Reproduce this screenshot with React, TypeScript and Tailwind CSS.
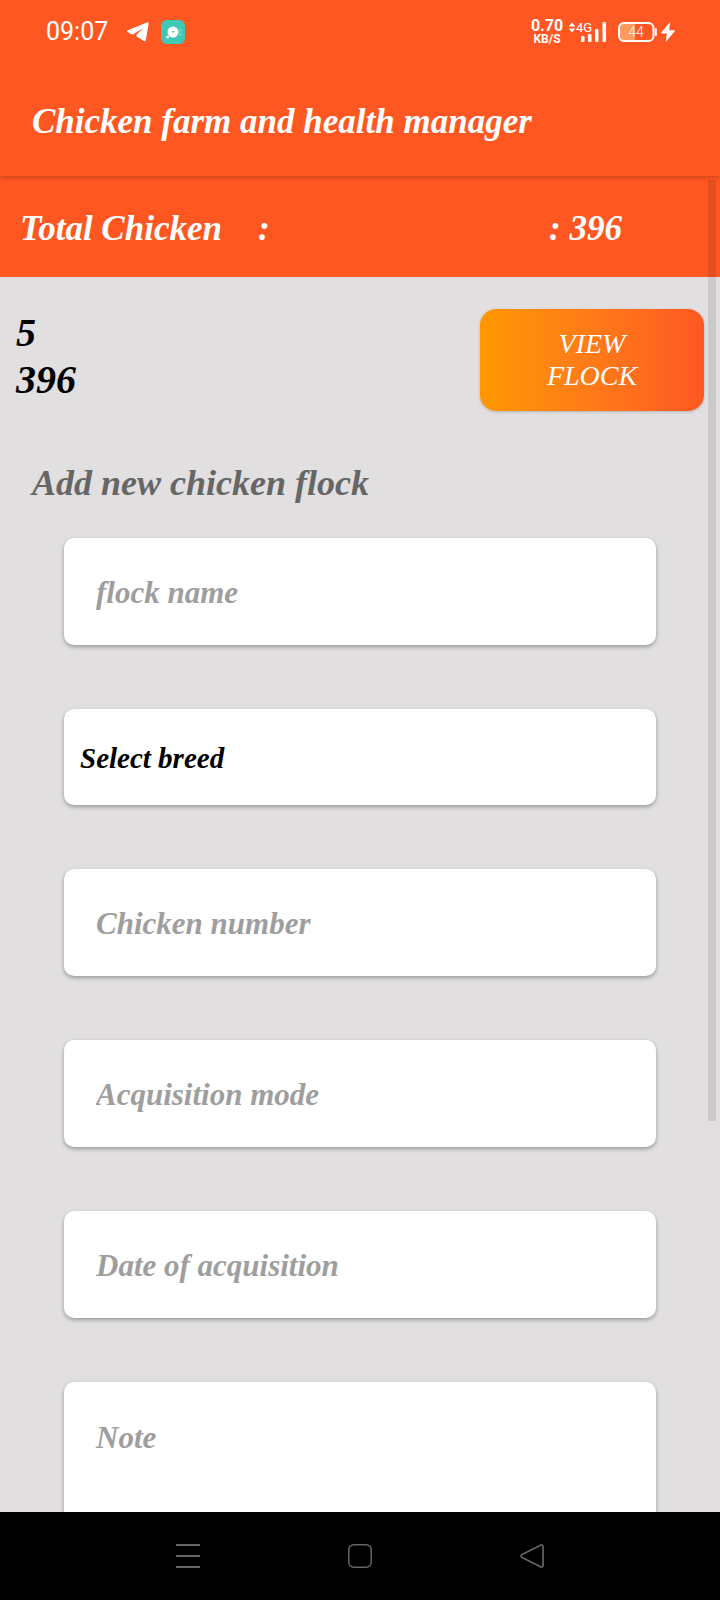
import React from "react";

const display = "font-['Liberation_Serif',serif] font-bold italic";
const card =
  "block w-full rounded-[10px] bg-white leading-10 shadow-[0_2px_4px_rgba(0,0,0,0.32)] outline-none placeholder:text-[#9e9e9e] placeholder:opacity-100";

function StatusBar() {
  return (
    <div className="flex h-16 items-center justify-between pr-[45px] pl-[46px] font-[Roboto,sans-serif] text-white not-italic">
      <div className="flex items-center">
        <span className="w-[81px] text-[25px] leading-8 font-normal">09:07</span>
        <svg className="h-5 w-[22px]" viewBox="0 0 22 20" fill="currentColor" aria-label="Telegram">
          <path d="M.8 8.3 19.8.5c1.2-.5 2 .1 1.800 1.300l-2.700 16.200c-.2 1.300-1.200 1.700-2.200 1L9.500 14.300c-.7-.5-.6-1 0-1.600L16 6.200 6.200 12.200c-.5.300-1 .3-1.500.1L.8 10.200c-.9-.5-.9-1.500 0-1.900Z" />
        </svg>
        <svg className="ml-3 size-6" viewBox="0 0 24 24" aria-label="Notification">
          <rect width="24" height="24" rx="6" fill="#3ec9b6" />
          <circle cx="12" cy="12" r="5.5" fill="#fff" />
          <circle cx="6.5" cy="17" r="1.5" fill="#fff" />
          <path d="M10.8 11h2.6l-1.3 2.2Z" fill="#3ec9b6" />
          <path d="M18.5 10H20m-1.5 2.2h1m-1 2.3H20" stroke="#fff" strokeWidth="1" opacity=".7" />
        </svg>
      </div>
      <div className="flex items-center">
        <div className="flex w-[34px] flex-col items-center font-bold">
          <span className="text-[16px] leading-[14px]">0.70</span>
          <span className="text-[12px] leading-3">KB/S</span>
        </div>
        <div className="relative ml-1 h-6 w-[40px]">
          <svg className="size-full" viewBox="0 0 40 24" fill="currentColor" aria-label="Signal">
            <path d="M4 2.5 7.3 6.5H.7ZM4 12.5.7 8.5h6.6Z" />
            <rect x="13" y="16" width="3.5" height="6" rx="1" />
            <rect x="20" y="14" width="3.5" height="8" rx="1" />
            <rect x="27" y="9" width="3.5" height="13" rx="1" />
            <rect x="34.5" y="2" width="3.5" height="20" rx="1" />
          </svg>
          <span className="absolute top-0.5 left-2 text-[13px] leading-3 font-normal">4G</span>
        </div>
        <div className="relative ml-2.5 h-5 w-[39px]">
          <svg className="size-full" viewBox="0 0 39 20" aria-label="Battery">
            <path d="M6 1h11v18H6a5 5 0 0 1-5-5V6a5 5 0 0 1 5-5Z" fill="#ff9a5c" />
            <rect x="1" y="1" width="34.5" height="18" rx="5" fill="none" stroke="#fff" strokeWidth="2" />
            <path d="M37.8 7v6" stroke="#fff" strokeWidth="2" strokeLinecap="round" />
          </svg>
          <span className="absolute inset-y-0 left-0 w-9 text-center text-[14px] leading-5 font-light">44</span>
        </div>
        <svg className="ml-1 h-5 w-[14px]" viewBox="0 0 14 20" fill="currentColor" aria-label="Charging">
          <path d="M9.2 0 .3 10.5c-.3.5-.2 1 .5 1H5.8L4.7 20 13.7 9.3c.4-.5.1-1-.5-1H8.2Z" />
        </svg>
      </div>
    </div>
  );
}

function Field({ label }: { label: string }) {
  return (
    <input
      type="text"
      aria-label={label}
      placeholder={label}
      className={`${card} h-[107px] px-8 pt-0.5 text-[31px]`}
    />
  );
}

export default function App() {
  return (
    <div className={`flex h-screen flex-col overflow-hidden bg-[#e1dfe0] ${display}`}>
      <header className="relative z-10 shrink-0 bg-[#ff5722] pb-[34px] text-white shadow-[0_1px_5px_rgba(0,0,0,0.25)]">
        <StatusBar />
        <h1 className="px-8 pt-[38px] text-[35px] leading-10">Chicken farm and health manager</h1>
      </header>

      <main className="relative min-h-0 flex-1 overflow-hidden">
        <section className="flex h-[101px] items-center bg-[#ff5722] px-5 pt-1 text-[35px] leading-10 text-white">
          <span className="w-[238px]">Total Chicken</span>
          <span className="flex-1">:</span>
          <span className="w-[151px]">: 396</span>
        </section>

        <section className="flex items-start justify-between px-4 pt-8">
          <div className="text-[40px] leading-[47px] text-black">
            <p>5</p>
            <p>396</p>
          </div>
          <button
            type="button"
            className="h-[102px] w-56 rounded-2xl bg-linear-to-r from-[#ff9800] to-[#ff5722] px-14 text-[28px] leading-8 font-normal text-white italic shadow-[0_1px_3px_rgba(0,0,0,0.2)]"
          >
            VIEW FLOCK
          </button>
        </section>

        <h2 className="px-8 pt-[52px] text-[36px] leading-10 text-[#666]">Add new chicken flock</h2>

        <form className="flex flex-col gap-16 px-16 pt-[35px]">
          <Field label="flock name" />
          <select aria-label="Breed" className={`${card} h-24 appearance-none px-4 pt-0.5 text-[29px] text-black`}>
            <option>Select breed</option>
          </select>
          <Field label="Chicken number" />
          <Field label="Acquisition mode" />
          <Field label="Date of acquisition" />
          <textarea
            aria-label="Note"
            placeholder="Note"
            className={`${card} h-60 resize-none px-8 pt-9 text-[31px]`}
          />
        </form>

        <div className="absolute top-1 right-1 h-[941px] w-2 bg-black/10" />
      </main>

      <nav className="flex h-[88px] shrink-0 items-center justify-center gap-[148px] bg-black text-[#666]">
        <button type="button" aria-label="Recent apps">
          <svg className="size-6" viewBox="0 0 24 24" fill="none" stroke="currentColor" strokeWidth="2">
            <path d="M0 1h24M0 12h24M0 23h24" />
          </svg>
        </button>
        <button type="button" aria-label="Home">
          <svg className="size-6" viewBox="0 0 24 24" fill="none" stroke="currentColor" strokeWidth="1.5">
            <rect x=".8" y=".8" width="22.4" height="22.4" rx="5" />
          </svg>
        </button>
        <button type="button" aria-label="Back">
          <svg className="size-6" viewBox="0 0 24 24" fill="none" stroke="currentColor" strokeWidth="1.7" strokeLinejoin="round">
            <path d="M20.5 1.2 2 10.5c-1.3.7-1.3 2.3 0 3l18.5 9.3c1.4.7 2.5 0 2.5-1.5V2.7c0-1.5-1.1-2.2-2.5-1.5Z" />
          </svg>
        </button>
      </nav>
    </div>
  );
}
